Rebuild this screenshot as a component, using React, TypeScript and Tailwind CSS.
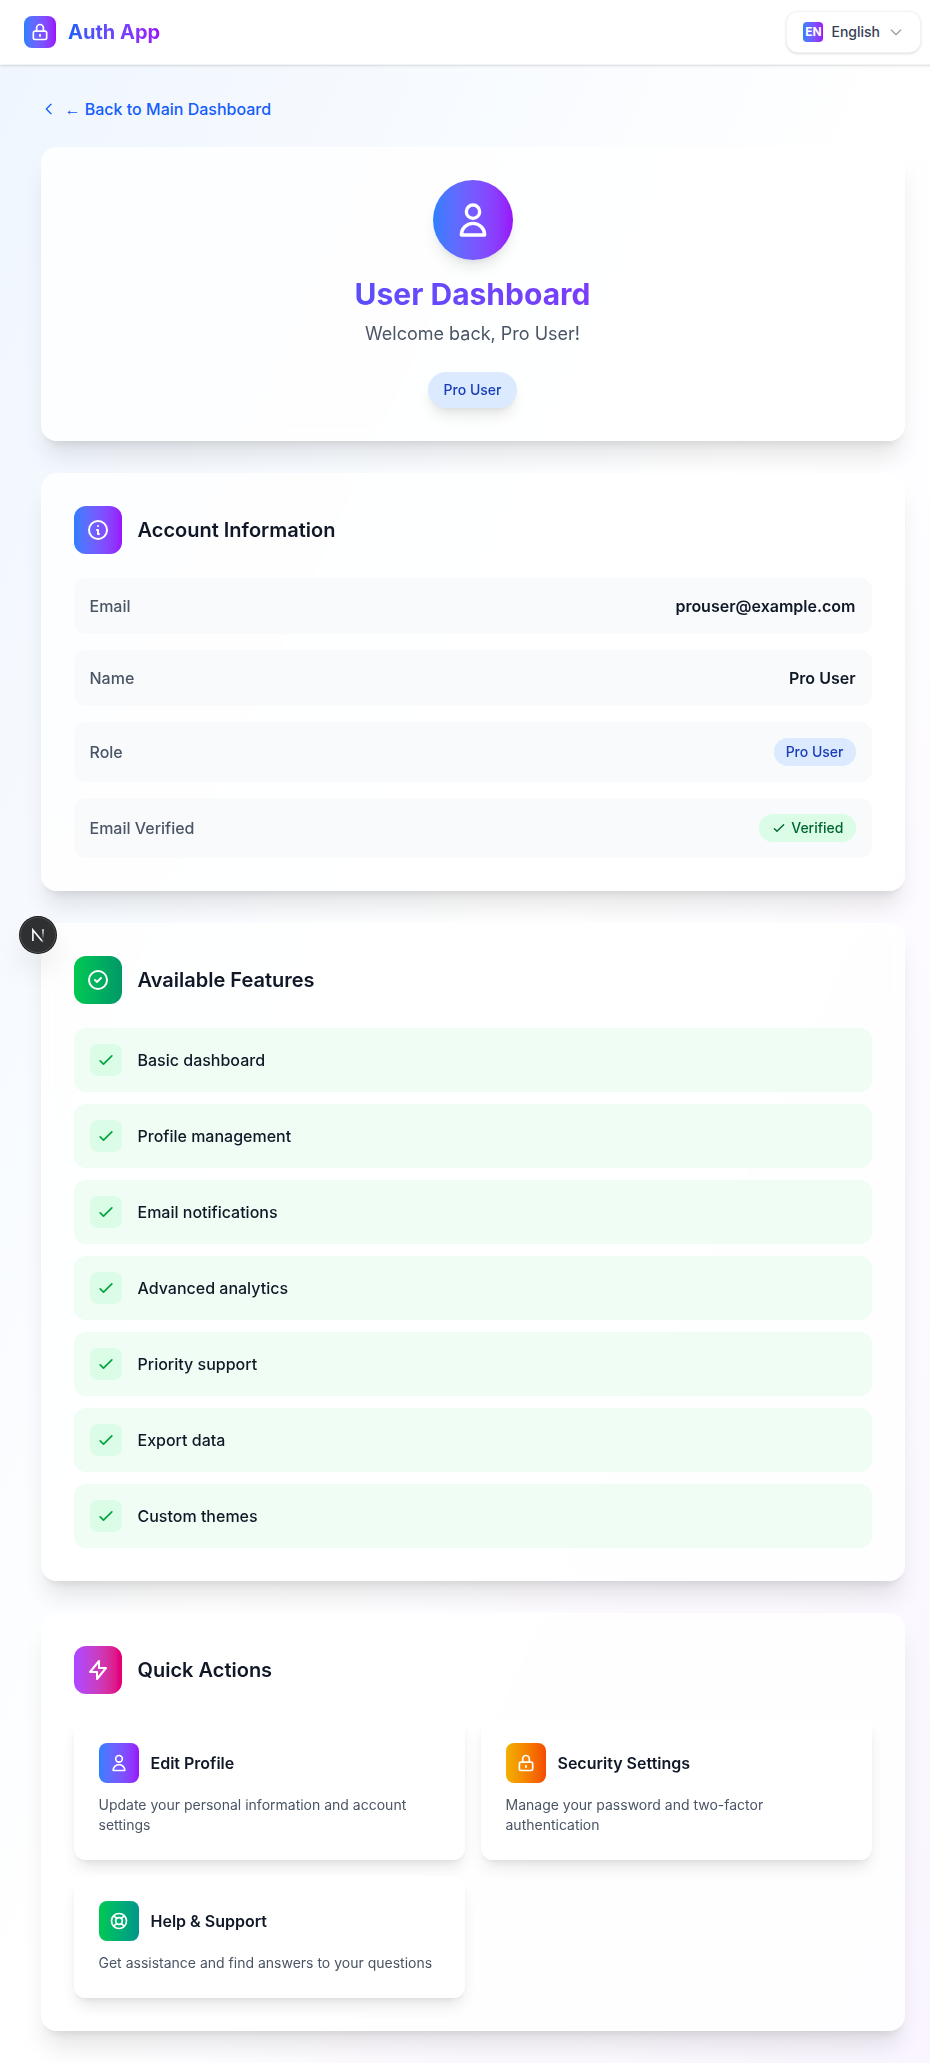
import React from "react";

const ICONS = {
  user: "M16 7a4 4 0 11-8 0 4 4 0 018 0zM12 14a7 7 0 00-7 7h14a7 7 0 00-7-7z",
  lock: "M12 15v2m-6 4h12a2 2 0 002-2v-6a2 2 0 00-2-2H6a2 2 0 00-2 2v6a2 2 0 002 2zm10-10V7a4 4 0 00-8 0v4h8z",
  info: "M13 16h-1v-4h-1m1-4h.01M21 12a9 9 0 11-18 0 9 9 0 0118 0z",
  checkCircle: "M9 12l2 2 4-4m6 2a9 9 0 11-18 0 9 9 0 0118 0z",
  bolt: "M13 10V3L4 14h7v7l9-11h-7z",
  support:
    "M18.364 5.636l-3.536 3.536m0 5.656l3.536 3.536M9.172 9.172L5.636 5.636m3.536 9.192l-3.536 3.536M21 12a9 9 0 11-18 0 9 9 0 0118 0zm-5 0a4 4 0 11-8 0 4 4 0 018 0z",
  check: "M5 13l4 4L19 7",
  left: "M15 19l-7-7 7-7",
  down: "M19 9l-7 7-7-7",
};

function Icon({ name, className }: { name: keyof typeof ICONS; className: string }) {
  return (
    <svg className={className} fill="none" stroke="currentColor" viewBox="0 0 24 24">
      <path strokeLinecap="round" strokeLinejoin="round" strokeWidth={2} d={ICONS[name]} />
    </svg>
  );
}

function Card({ children, className = "" }: { children: React.ReactNode; className?: string }) {
  return (
    <section className={`rounded-2xl border border-white/20 bg-white/80 p-8 shadow-xl backdrop-blur-sm ${className}`}>
      {children}
    </section>
  );
}

function SectionTitle({ icon, gradient, children }: { icon: keyof typeof ICONS; gradient: string; children: React.ReactNode }) {
  return (
    <div className="mb-6 flex items-center gap-4">
      <div className={`flex h-12 w-12 items-center justify-center rounded-xl bg-gradient-to-r ${gradient}`}>
        <Icon name={icon} className="h-6 w-6 text-white" />
      </div>
      <h2 className="text-xl font-semibold text-gray-900">{children}</h2>
    </div>
  );
}

function InfoRow({ label, children }: { label: string; children: React.ReactNode }) {
  return (
    <div className="flex items-center justify-between rounded-xl bg-gray-50 p-4">
      <span className="font-medium text-gray-600">{label}</span>
      {children}
    </div>
  );
}

const features = [
  "Basic dashboard",
  "Profile management",
  "Email notifications",
  "Advanced analytics",
  "Priority support",
  "Export data",
  "Custom themes",
];

const actions: { title: string; text: string; icon: keyof typeof ICONS; gradient: string }[] = [
  {
    title: "Edit Profile",
    text: "Update your personal information and account settings",
    icon: "user",
    gradient: "from-blue-500 to-purple-600",
  },
  {
    title: "Security Settings",
    text: "Manage your password and two-factor authentication",
    icon: "lock",
    gradient: "from-yellow-500 to-orange-600",
  },
  {
    title: "Help & Support",
    text: "Get assistance and find answers to your questions",
    icon: "support",
    gradient: "from-green-500 to-teal-600",
  },
];

function DevBadge() {
  return (
    <div className="fixed left-[20px] top-[917px] flex h-9 w-9 items-center justify-center rounded-full bg-[#2f3031] shadow-[0_0_0_1px_#171717,inset_0_0_0_1px_rgba(255,255,255,0.14),0_16px_32px_-8px_rgba(0,0,0,0.24)]">
      <svg width="40" height="40" viewBox="0 0 40 40" fill="none" className="shrink-0">
        <defs>
          <linearGradient id="diag" x1="21" y1="20" x2="26" y2="27" gradientUnits="userSpaceOnUse">
            <stop stopColor="white" />
            <stop offset="0.6" stopColor="white" />
            <stop offset="1" stopColor="white" stopOpacity="0.2" />
          </linearGradient>
          <linearGradient id="stem" x1="25" y1="14" x2="25" y2="24" gradientUnits="userSpaceOnUse">
            <stop stopColor="white" />
            <stop offset="1" stopColor="white" stopOpacity="0" />
          </linearGradient>
        </defs>
        <path d="M14.9 26V14.9L24.9 27" stroke="url(#diag)" strokeWidth="1.6" />
        <path d="M25 14.2V24" stroke="url(#stem)" strokeWidth="1.6" />
      </svg>
    </div>
  );
}

export default function App() {
  return (
    <div className="w-full overflow-hidden font-['Inter',sans-serif]">
      <div className="min-h-[2063px] w-[945px] bg-gradient-to-br from-blue-50 via-white to-purple-50">
        <header className="relative border-b border-gray-200/50 bg-white/95 shadow-sm">
          <div className="flex h-16 items-center justify-between px-6">
            <div className="flex items-center gap-3">
              <div className="flex h-8 w-8 items-center justify-center rounded-lg bg-gradient-to-r from-blue-500 to-purple-600">
                <Icon name="lock" className="h-5 w-5 text-white" />
              </div>
              <span className="bg-gradient-to-r from-blue-600 to-purple-600 bg-clip-text text-xl font-bold text-transparent">
                Auth App
              </span>
            </div>
            <button className="flex items-center gap-2 rounded-xl border border-gray-200/50 bg-white px-4 py-2.5 text-sm font-medium text-gray-700 shadow-sm">
              <span className="flex h-5 w-5 items-center justify-center rounded-sm bg-gradient-to-r from-blue-500 to-purple-600 text-xs font-bold text-white">
                EN
              </span>
              <span>English</span>
              <Icon name="down" className="h-4 w-4 text-gray-400" />
            </button>
          </div>
        </header>

        <main className="mx-auto max-w-4xl px-4 py-8">
          <a className="mb-[26px] flex h-6 items-center gap-2 font-medium text-blue-600">
            <Icon name="left" className="h-4 w-4" />
            <span>
              <span className="font-['Liberation_Sans',sans-serif]">←</span> Back to Main Dashboard
            </span>
          </a>

          <div className="flex flex-col gap-8">
            <Card className="text-center">
              <div className="mx-auto mb-4 flex h-20 w-20 items-center justify-center rounded-full bg-gradient-to-r from-blue-500 to-purple-600 shadow-lg">
                <Icon name="user" className="h-10 w-10 text-white" />
              </div>
              <h1 className="mb-2 bg-gradient-to-r from-blue-600 to-purple-600 bg-clip-text text-3xl font-bold text-transparent">
                User Dashboard
              </h1>
              <p className="mb-6 text-lg text-gray-600">Welcome back, Pro User!</p>
              <div className="flex justify-center">
                <span className="rounded-full bg-blue-100 px-4 py-2 text-sm font-medium text-blue-800 shadow-lg">
                  Pro User
                </span>
              </div>
            </Card>

            <Card>
              <SectionTitle icon="info" gradient="from-blue-500 to-purple-600">
                Account Information
              </SectionTitle>
              <div className="flex flex-col gap-4">
                <InfoRow label="Email">
                  <span className="font-semibold text-gray-900">prouser@example.com</span>
                </InfoRow>
                <InfoRow label="Name">
                  <span className="font-semibold text-gray-900">Pro User</span>
                </InfoRow>
                <InfoRow label="Role">
                  <span className="rounded-full bg-blue-100 px-3 py-1 text-sm font-medium text-blue-800">Pro User</span>
                </InfoRow>
                <InfoRow label="Email Verified">
                  <span className="flex items-center gap-1 rounded-full bg-green-100 px-3 py-1 text-sm font-medium text-green-800">
                    <Icon name="check" className="h-4 w-4" />
                    Verified
                  </span>
                </InfoRow>
              </div>
            </Card>

            <Card>
              <SectionTitle icon="checkCircle" gradient="from-green-500 to-emerald-600">
                Available Features
              </SectionTitle>
              <ul className="flex flex-col gap-3">
                {features.map((feature) => (
                  <li key={feature} className="flex items-center gap-4 rounded-xl bg-green-50 p-4">
                    <div className="flex h-8 w-8 items-center justify-center rounded-lg bg-green-100">
                      <Icon name="check" className="h-5 w-5 text-green-600" />
                    </div>
                    <span className="font-medium text-gray-900">{feature}</span>
                  </li>
                ))}
              </ul>
            </Card>

            <Card>
              <SectionTitle icon="bolt" gradient="from-purple-500 to-pink-600">
                Quick Actions
              </SectionTitle>
              <div className="grid grid-cols-2 gap-4">
                {actions.map((action) => (
                  <div key={action.title} className="rounded-xl border border-white/20 bg-white/80 p-6 shadow-lg">
                    <div className="mb-3 flex items-center gap-3">
                      <div
                        className={`flex h-10 w-10 items-center justify-center rounded-lg bg-gradient-to-r ${action.gradient}`}
                      >
                        <Icon name={action.icon} className="h-5 w-5 text-white" />
                      </div>
                      <h3 className="font-semibold text-gray-900">{action.title}</h3>
                    </div>
                    <p className="text-sm text-gray-600">{action.text}</p>
                  </div>
                ))}
              </div>
            </Card>
          </div>
        </main>
      </div>
      <DevBadge />
    </div>
  );
}
